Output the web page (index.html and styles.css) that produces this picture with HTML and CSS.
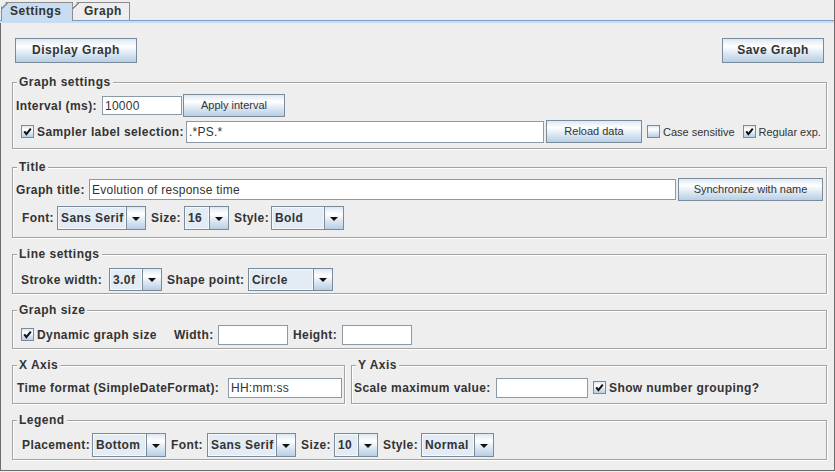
FILE: index.html
```html
<!DOCTYPE html>
<html>
<head>
<meta charset="utf-8">
<link rel="stylesheet" href="styles.css">
</head>
<body>
<div class="window">
  <div class="tabbar">
    <div class="tab tab-active tab-settings">Settings</div>
    <div class="tab tab-graph">Graph</div>
  </div>
  <div class="tabline"></div>
  <div class="panel">
    <div class="toolbar">
      <div class="btn btn-big w-display">Display Graph</div>
      <div class="btn btn-big w-save">Save Graph</div>
    </div>

    <div class="group g-settings">
      <div class="group-title">Graph settings</div>
      <div class="row gs-row1">
        <span class="lbl w-interval">Interval (ms):</span>
        <div class="field w-f-interval">10000</div>
        <div class="btn btn-sm w-apply">Apply interval</div>
      </div>
      <div class="row gs-row2">
        <span class="cb checked"><svg viewBox="0 0 11 11" width="11" height="11"><path d="M2.3 5.4 L4.4 8.2 L8.8 2.6" fill="none" stroke="#111" stroke-width="2"/></svg></span>
        <span class="lbl w-sampler">Sampler label selection:</span>
        <div class="field w-f-sampler">.*PS.*</div>
        <div class="btn btn-sm w-reload">Reload data</div>
        <span class="cb cb-case"></span>
        <span class="plain">Case sensitive</span>
        <span class="cb checked cb-regex"><svg viewBox="0 0 11 11" width="11" height="11"><path d="M2.3 5.4 L4.4 8.2 L8.8 2.6" fill="none" stroke="#111" stroke-width="2"/></svg></span>
        <span class="plain">Regular exp.</span>
      </div>
    </div>

    <div class="group g-title">
      <div class="group-title">Title</div>
      <div class="row t-row1">
        <span class="lbl w-gtitle">Graph title:</span>
        <div class="field w-f-title">Evolution of response time</div>
        <div class="btn btn-sm w-sync">Synchronize with name</div>
      </div>
      <div class="row flow t-row2">
        <span class="lbl lw-font">Font:</span>
        <div class="combo w-c-font"><span class="combo-val">Sans Serif</span><span class="combo-arrow"><i></i></span></div>
        <span class="lbl lw-size">Size:</span>
        <div class="combo w-c-size"><span class="combo-val">16</span><span class="combo-arrow"><i></i></span></div>
        <span class="lbl lw-style">Style:</span>
        <div class="combo w-c-style"><span class="combo-val">Bold</span><span class="combo-arrow"><i></i></span></div>
      </div>
    </div>

    <div class="group g-line">
      <div class="group-title">Line settings</div>
      <div class="row flow l-row">
        <span class="lbl lw-stroke">Stroke width:</span>
        <div class="combo w-c-stroke"><span class="combo-val">3.0f</span><span class="combo-arrow"><i></i></span></div>
        <span class="lbl lw-shape">Shape point:</span>
        <div class="combo w-c-shape"><span class="combo-val">Circle</span><span class="combo-arrow"><i></i></span></div>
      </div>
    </div>

    <div class="group g-size">
      <div class="group-title">Graph size</div>
      <div class="row s-row">
        <span class="cb checked"><svg viewBox="0 0 11 11" width="11" height="11"><path d="M2.3 5.4 L4.4 8.2 L8.8 2.6" fill="none" stroke="#111" stroke-width="2"/></svg></span>
        <span class="lbl cb-text lw-dyn">Dynamic graph size</span>
        <span class="lbl lw-width">Width:</span>
        <div class="field w-f-size"></div>
        <span class="lbl lw-height">Height:</span>
        <div class="field w-f-size"></div>
      </div>
    </div>

    <div class="axes">
      <div class="group g-x">
        <div class="group-title">X Axis</div>
        <div class="row x-row">
          <span class="lbl">Time format (SimpleDateFormat):</span>
          <div class="field w-f-time">HH:mm:ss</div>
        </div>
      </div>
      <div class="group g-y">
        <div class="group-title">Y Axis</div>
        <div class="row y-row">
          <span class="lbl lw-scale">Scale maximum value:</span>
          <div class="field w-f-scale"></div>
          <span class="cb checked cb-group"><svg viewBox="0 0 11 11" width="11" height="11"><path d="M2.3 5.4 L4.4 8.2 L8.8 2.6" fill="none" stroke="#111" stroke-width="2"/></svg></span>
          <span class="lbl cb-text">Show number grouping?</span>
        </div>
      </div>
    </div>

    <div class="group g-legend">
      <div class="group-title">Legend</div>
      <div class="row flow lg-row">
        <span class="lbl lw-place">Placement:</span>
        <div class="combo w-c-place"><span class="combo-val">Bottom</span><span class="combo-arrow"><i></i></span></div>
        <span class="lbl lw-font2">Font:</span>
        <div class="combo w-c-font"><span class="combo-val">Sans Serif</span><span class="combo-arrow"><i></i></span></div>
        <span class="lbl lw-size">Size:</span>
        <div class="combo w-c-size2"><span class="combo-val">10</span><span class="combo-arrow"><i></i></span></div>
        <span class="lbl lw-style2">Style:</span>
        <div class="combo w-c-style"><span class="combo-val">Normal</span><span class="combo-arrow"><i></i></span></div>
      </div>
    </div>
  </div>
</div>
</body>
</html>
```

FILE: styles.css
```css
html, body {
  margin: 0;
  padding: 0;
  background: #eeeeee;
}
body {
  font-family: "Liberation Sans", Arial, sans-serif;
  font-size: 12px;
  color: #333333;
}
.window {
  width: 835px;
  height: 471px;
  box-sizing: border-box;
  border-right: 1px solid #6d6d6d;
}

/* ---------- tabs ---------- */
.tabbar {
  height: 21px;
  box-sizing: border-box;
  display: flex;
  align-items: flex-end;
  padding-left: 1px;
  border-bottom: 1px solid #7f9ccb;
}
.tab {
  height: 18px;
  box-sizing: border-box;
  border: 1px solid #8c8c8c;
  border-bottom: none;
  font-weight: bold;
  letter-spacing: 0.5px;
  line-height: 17px;
  color: #333;
  clip-path: polygon(5px 0, 100% 0, 100% 100%, 0 100%, 0 5px);
  background: linear-gradient(135deg, transparent 0 3.1px, #8c8c8c 3.1px 4.4px, transparent 4.4px) 0 0 / 8px 8px no-repeat, #eeeeee;
}
.tab-active {
  height: 19px;
  margin-bottom: -1px;
  background: linear-gradient(135deg, transparent 0 3.1px, #8c8c8c 3.1px 4.4px, transparent 4.4px) 0 0 / 8px 8px no-repeat, #c8ddf2;
}
.tab-settings {
  width: 72px;
  padding-left: 8px;
}
.tab-graph {
  width: 58px;
  margin-left: -1px;
  padding-left: 11px;
}
.tabline {
  height: 2px;
  background: #c8ddf2;
}

/* ---------- panel ---------- */
.panel {
  height: 448px;
  box-sizing: border-box;
  border-left: 1px solid #6d6d6d;
  border-bottom: 1px solid #6d6d6d;
  padding: 15px 7px 0 11px;
}
.toolbar {
  display: flex;
  justify-content: space-between;
  padding: 0 3px;
}

/* ---------- buttons ---------- */
.btn {
  box-sizing: border-box;
  border: 1px solid #7a8a99;
  background: linear-gradient(to bottom, #dde8f3 0%, #ffffff 32%, #dde8f3 62%, #b8cfe5 100%);
  text-align: center;
  color: #333;
  flex: none;
}
.btn-big {
  height: 25px;
  line-height: 23px;
  font-weight: bold;
  font-size: 12px;
  letter-spacing: 0.5px;
}
.btn-sm {
  height: 23px;
  line-height: 21px;
  font-size: 11px;
}
.w-display { width: 122px; }
.w-save { width: 102px; }
.w-apply { width: 102px; margin-left: 1px; }
.w-reload { width: 96px; margin-left: 2px; }
.w-sync { width: 145px; margin-left: 2px; }

/* ---------- groups ---------- */
.group {
  border: 1px solid #a2a2a2;
  box-shadow: inset 1px 1px 0 #ffffff, 1px 1px 0 #ffffff;
}
.group-title {
  width: fit-content;
  margin: -8px 0 0 4px;
  padding: 0 2px;
  height: 14px;
  line-height: 14px;
  background: #eeeeee;
  font-weight: bold;
  letter-spacing: 0.5px;
  color: #333;
}
.g-settings { margin-top: 19px; padding-bottom: 5px; }
.g-title { margin-top: 18px; padding-bottom: 7px; }
.g-line { margin-top: 16px; padding-bottom: 2px; }
.g-size { margin-top: 16px; padding-bottom: 2px; }
.axes {
  display: flex;
  gap: 6px;
  margin-top: 16px;
}
.g-x { width: 333px; box-sizing: border-box; padding-bottom: 5px; flex: none; }
.g-y { flex: 1; padding-bottom: 5px; }
.g-legend { margin-top: 16px; padding-bottom: 2px; }

/* ---------- rows ---------- */
.row {
  display: flex;
  align-items: center;
  white-space: nowrap;
}
.flow { gap: 5px; }
.lbl {
  font-weight: bold;
  letter-spacing: 0.4px;
  color: #333;
  flex: none;
}
.plain {
  font-size: 11px;
  color: #333;
  flex: none;
}
.gs-row1 { margin-top: 5px; height: 23px; padding-left: 3px; }
.gs-row2 { margin-top: 3px; height: 23px; padding-left: 8px; }
.t-row1 { margin-top: 4px; height: 23px; padding-left: 3px; }
.t-row2 { margin-top: 5px; height: 24px; padding-left: 9px; }
.l-row { margin-top: 7px; height: 23px; padding-left: 8px; }
.s-row { margin-top: 6px; height: 23px; padding-left: 8px; }
.x-row { margin-top: 5px; height: 21px; padding-left: 4px; padding-right: 2px; }
.y-row { margin-top: 5px; height: 21px; padding-left: 2px; }
.lg-row { margin-top: 6px; height: 24px; padding-left: 9px; }

/* label boxes sized like the Swing layout */
.w-interval { width: 86px; }
.w-sampler { width: 149px; margin-left: 3px; }
.w-gtitle { width: 73px; }
.lw-font { width: 30px; }
.lw-size { width: 28px; }
.lw-style { width: 32px; }
.lw-stroke { width: 83px; }
.lw-shape { width: 76px; }
.lw-place { width: 65px; }
.lw-font2 { width: 31px; }
.lw-style2 { width: 33px; }
.lw-dyn { width: 137px; }
.lw-width { width: 39px; }
.lw-height { width: 44px; margin-left: 5px; }
.lw-scale { width: 139px; }
.cb-text { margin-left: 3px; }
.s-row .field { margin-left: 5px; }

/* ---------- text fields ---------- */
.field {
  box-sizing: border-box;
  background: #ffffff;
  border: 1px solid #8c99a6;
  padding-left: 2px;
  font-size: 12px;
  letter-spacing: 0.25px;
  color: #333;
  flex: none;
  display: flex;
  align-items: center;
}
.w-f-interval { width: 80px; height: 19px; }
.w-f-sampler { width: 358px; height: 22px; }
.w-f-title { width: 587px; height: 21px; }
.w-f-size { width: 70px; height: 20px; }
.w-f-time { width: 114px; height: 20px; margin-left: auto; }
.w-f-scale { width: 92px; height: 20px; margin-left: 3px; }

/* ---------- checkboxes ---------- */
.cb {
  width: 13px;
  height: 13px;
  box-sizing: border-box;
  border: 1px solid #7a8a99;
  background: linear-gradient(to bottom, #dde8f3 0%, #ffffff 32%, #dde8f3 62%, #b8cfe5 100%);
  flex: none;
  display: flex;
}
.cb svg { display: block; }
.cb-case { margin-left: 5px; margin-right: 3px; }
.cb-regex { margin-left: 8px; margin-right: 3px; }
.cb-group { margin-left: 5px; }

/* ---------- combos ---------- */
.combo {
  box-sizing: border-box;
  height: 23px;
  border: 1px solid #7a8a99;
  display: flex;
  flex: none;
}
.t-row2 .combo, .lg-row .combo { height: 24px; }
.combo-val {
  flex: 1;
  box-sizing: border-box;
  background: #e3ebf4;
  border: 1px solid #f6f9fc;
  padding-left: 2px;
  font-weight: bold;
  letter-spacing: 0.4px;
  color: #333;
  display: flex;
  align-items: center;
  overflow: hidden;
}
.combo-arrow {
  width: 19px;
  flex: none;
  box-sizing: border-box;
  border-left: 1px solid #7a8a99;
  background: linear-gradient(to bottom, #dde8f3 0%, #ffffff 32%, #dde8f3 62%, #b8cfe5 100%);
  display: flex;
  align-items: center;
  justify-content: center;
}
.combo-arrow i {
  display: block;
  width: 0;
  height: 0;
  border-left: 4px solid transparent;
  border-right: 4px solid transparent;
  border-top: 4px solid #111;
  margin-top: 1px;
}
.w-c-font { width: 89px; }
.w-c-size { width: 45px; }
.w-c-style { width: 73px; }
.w-c-stroke { width: 53px; }
.w-c-shape { width: 85px; }
.w-c-place { width: 74px; }
.w-c-size2 { width: 44px; }
```
